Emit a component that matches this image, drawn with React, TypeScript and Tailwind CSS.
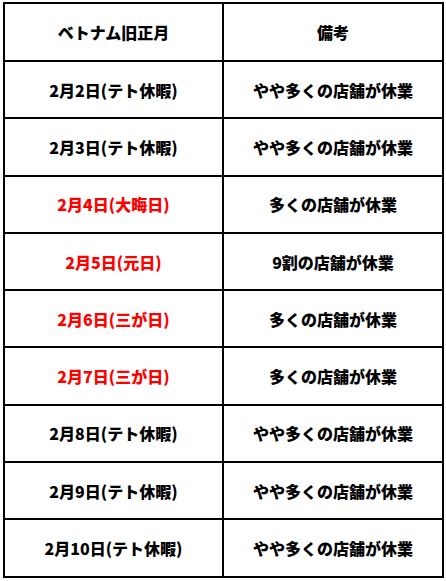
const rows = [
  { date: "2月2日(テト休暇)", note: "やや多くの店舗が休業", red: false },
  { date: "2月3日(テト休暇)", note: "やや多くの店舗が休業", red: false },
  { date: "2月4日(大晦日)", note: "多くの店舗が休業", red: true },
  { date: "2月5日(元日)", note: "9割の店舗が休業", red: true },
  { date: "2月6日(三が日)", note: "多くの店舗が休業", red: true },
  { date: "2月7日(三が日)", note: "多くの店舗が休業", red: true },
  { date: "2月8日(テト休暇)", note: "やや多くの店舗が休業", red: false },
  { date: "2月9日(テト休暇)", note: "やや多くの店舗が休業", red: false },
  { date: "2月10日(テト休暇)", note: "やや多くの店舗が休業", red: false },
];

export default function App() {
  return (
    <div
      className="w-[446px] h-[581px] bg-white pl-[3px] pt-[2px]"
      style={{ fontFamily: '"Noto Sans CJK JP", "Noto Sans", sans-serif' }}
    >
      <table className="w-[441px] border-collapse border-2 border-black text-[16px] font-black text-black table-fixed">
        <thead>
          <tr className="h-[58px]">
            <th className="w-[219px] border-2 border-black font-black">ベトナム旧正月</th>
            <th className="border-2 border-black font-black">備考</th>
          </tr>
        </thead>
        <tbody>
          {rows.map((r) => (
            <tr key={r.date} className="h-[57.3px]">
              <td className={`border-2 border-black text-center ${r.red ? "text-[#ff0000]" : ""}`}>
                {r.date}
              </td>
              <td className="border-2 border-black text-center">{r.note}</td>
            </tr>
          ))}
        </tbody>
      </table>
    </div>
  );
}
